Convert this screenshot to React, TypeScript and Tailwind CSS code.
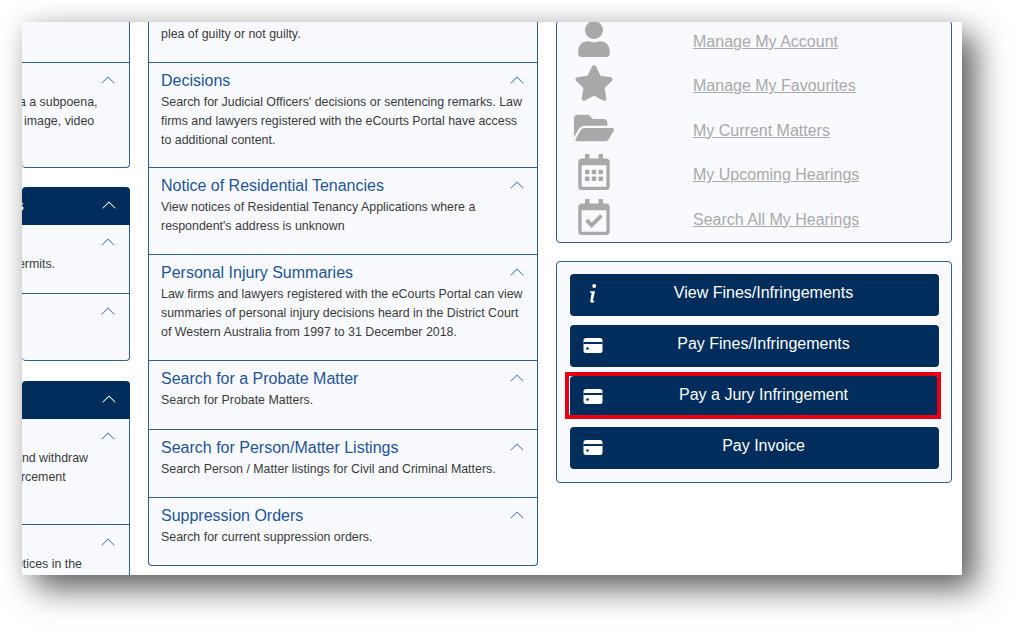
import React from 'react';
import { BsChevronUp } from 'react-icons/bs';
import { FaUser, FaStar, FaFolderOpen, FaRegCalendarAlt, FaRegCalendarCheck } from 'react-icons/fa';

const MiddleRow: React.FC<{ title: string; lines: string[]; height: string }> = ({ title, lines, height }) => (
  <div className={`relative border-t border-[#2f5f92] px-3 pt-[7px] ${height}`}>
    <BsChevronUp className="absolute right-[12px] top-[9px] text-[#4f7fb5]" size={16} />
    <h3 className="mb-[2px] text-base leading-[21px] text-[#1d5497]">{title}</h3>
    {lines.map((line) => (
      <p key={line} className="text-[12.4px] leading-[19px] text-[#3a3a3a]">{line}</p>
    ))}
  </div>
);

const LeftRow: React.FC<{ lines?: { text: string; offset: string }[]; height: string; first?: boolean }> = ({ lines = [], height, first }) => (
  <div className={`relative overflow-hidden ${first ? '' : 'border-t border-[#2f5f92]'} ${height}`}>
    <BsChevronUp className="absolute right-[13px] top-[9px] text-[#4f7fb5]" size={16} />
    <div className="pt-[30px]">
      {lines.map((line) => (
        <p key={line.text} className={`whitespace-nowrap text-[12.4px] leading-[19px] text-[#3a3a3a] ${line.offset}`}>{line.text}</p>
      ))}
    </div>
  </div>
);

const LeftHeader: React.FC<{ label?: string }> = ({ label }) => (
  <div className="relative flex h-[38px] items-center overflow-hidden rounded-t bg-[#002d5c] text-base font-bold text-white">
    {label && <span className="-ml-[7px]">{label}</span>}
    <BsChevronUp className="absolute right-[13px] top-[10px] text-white" size={16} />
  </div>
);

const accountLinks = [
  { label: 'Manage My Account', icon: <FaUser size={36} /> },
  { label: 'Manage My Favourites', icon: <FaStar size={40} /> },
  { label: 'My Current Matters', icon: <FaFolderOpen size={40} /> },
  { label: 'My Upcoming Hearings', icon: <FaRegCalendarAlt size={36} /> },
  { label: 'Search All My Hearings', icon: <FaRegCalendarCheck size={36} /> },
];

const InfoIcon = () => (
  <svg width="10" height="20" viewBox="0 0 10 20" fill="currentColor">
    <circle cx="6.2" cy="2" r="2" />
    <path d="M2 7.2h5L5 16.2c-.1.6.3.8 1.500.5l-.3 1.600C4.800 19 2.200 19.300 2.300 16.800L3.700 8.800 2 8.500z" />
  </svg>
);

const CardIcon = () => (
  <svg width="20" height="15" viewBox="0 0 20 15" className="mt-[3px]">
    <rect x="0.5" y="0" width="19" height="15" rx="2.5" fill="#fff" />
    <rect x="0.5" y="4" width="19" height="2" fill="#002d5c" />
    <circle cx="4.500" cy="10.500" r="1.300" fill="#002d5c" />
  </svg>
);

const ActionButton: React.FC<{ label: string; icon: React.ReactNode; highlighted?: boolean }> = ({ label, icon, highlighted }) => (
  <div className="relative">
    <a className="relative flex h-[42px] items-center justify-center rounded bg-[#002d5c] pb-[3px] pl-[18px] text-base text-white">
      <span className="absolute left-[13px] top-[10px] flex w-5 justify-center">{icon}</span>
      {label}
    </a>
    {highlighted && <div className="absolute -bottom-[1px] -left-[5px] -right-[2px] -top-[4px] border-4 border-[#e60012]" />}
  </div>
);

export default function App() {
  return (
    <div className="h-[630px] w-[1016px] overflow-hidden bg-white pl-[22px] pt-[22px] font-['Liberation_Sans',Arial,sans-serif]">
      <div className="h-[553px] w-[940px] overflow-hidden bg-white shadow-[14px_14px_30px_rgba(0,0,0,0.6),0_0_22px_rgba(0,0,0,0.1)]">
        <div className="flex items-start">
          {/* left column, cut off by the screenshot */}
          <div className="w-[108px] shrink-0">
            <div className="rounded-b border-r border-b border-[#2f5f92] bg-[#f9faff]">
              <div className="h-[40px]" />
              <LeftRow
                height="h-[105px]"
                lines={[
                  { text: 'via a subpoena,', offset: '-ml-[12px]' },
                  { text: 'image, video', offset: 'ml-[2px]' },
                ]}
              />
            </div>
            <div className="mt-[19px]">
              <LeftHeader label="s" />
              <div className="rounded-b border-r border-b border-[#2f5f92] bg-[#f9faff]">
                <LeftRow height="h-[68px]" first lines={[{ text: 'permits.', offset: '-ml-[11px]' }]} />
                <LeftRow height="h-[67px]" />
              </div>
            </div>
            <div className="mt-[20px]">
              <LeftHeader />
              <div className="border-r border-[#2f5f92] bg-[#f9faff]">
                <LeftRow
                  height="h-[105px]"
                  first
                  lines={[
                    { text: 'and withdraw', offset: '-ml-[7px]' },
                    { text: 'orcement', offset: '-ml-[8px]' },
                  ]}
                />
                <LeftRow height="h-[60px]" lines={[{ text: 'notices in the', offset: '-ml-[13px]' }]} />
              </div>
            </div>
          </div>

          {/* middle column */}
          <div className="ml-[18px] w-[390px] shrink-0 overflow-hidden rounded-b border-x border-b border-[#2f5f92] bg-[#f9faff]">
            <div className="h-[40px] px-3 pt-[3px] text-[12.4px] leading-[19px] text-[#3a3a3a]">plea of guilty or not guilty.</div>
            <MiddleRow
              title="Decisions"
              height="h-[105px]"
              lines={[
                "Search for Judicial Officers' decisions or sentencing remarks. Law",
                'firms and lawyers registered with the eCourts Portal have access',
                'to additional content.',
              ]}
            />
            <MiddleRow
              title="Notice of Residential Tenancies"
              height="h-[87px]"
              lines={["View notices of Residential Tenancy Applications where a", "respondent's address is unknown"]}
            />
            <MiddleRow
              title="Personal Injury Summaries"
              height="h-[106px]"
              lines={[
                'Law firms and lawyers registered with the eCourts Portal can view',
                'summaries of personal injury decisions heard in the District Court',
                'of Western Australia from 1997 to 31 December 2018.',
              ]}
            />
            <MiddleRow title="Search for a Probate Matter" height="h-[69px]" lines={['Search for Probate Matters.']} />
            <MiddleRow
              title="Search for Person/Matter Listings"
              height="h-[68px]"
              lines={['Search Person / Matter listings for Civil and Criminal Matters.']}
            />
            <MiddleRow title="Suppression Orders" height="h-[68px]" lines={['Search for current suppression orders.']} />
          </div>

          {/* right column */}
          <div className="ml-[18px] w-[396px] shrink-0">
            <div className="-mt-[2px] flex flex-col gap-[8.4px] rounded border border-[#2f5f92] bg-[#f9faff] pb-[7px]">
              {accountLinks.map((link) => (
                <div key={link.label} className="flex h-[36px] items-center text-[#a9a9a9]">
                  <span className="flex w-[74px] shrink-0 justify-center">{link.icon}</span>
                  <a className="ml-[62px] pt-[6px] text-base underline">{link.label}</a>
                </div>
              ))}
            </div>
            <div className="mt-[18px] flex flex-col gap-[9px] rounded border border-[#2f5f92] bg-[#f9faff] pb-[13px] pl-[13px] pr-[12px] pt-[12px]">
              <ActionButton label="View Fines/Infringements" icon={<InfoIcon />} />
              <ActionButton label="Pay Fines/Infringements" icon={<CardIcon />} />
              <ActionButton label="Pay a Jury Infringement" icon={<CardIcon />} highlighted />
              <ActionButton label="Pay Invoice" icon={<CardIcon />} />
            </div>
          </div>
        </div>
      </div>
    </div>
  );
}
